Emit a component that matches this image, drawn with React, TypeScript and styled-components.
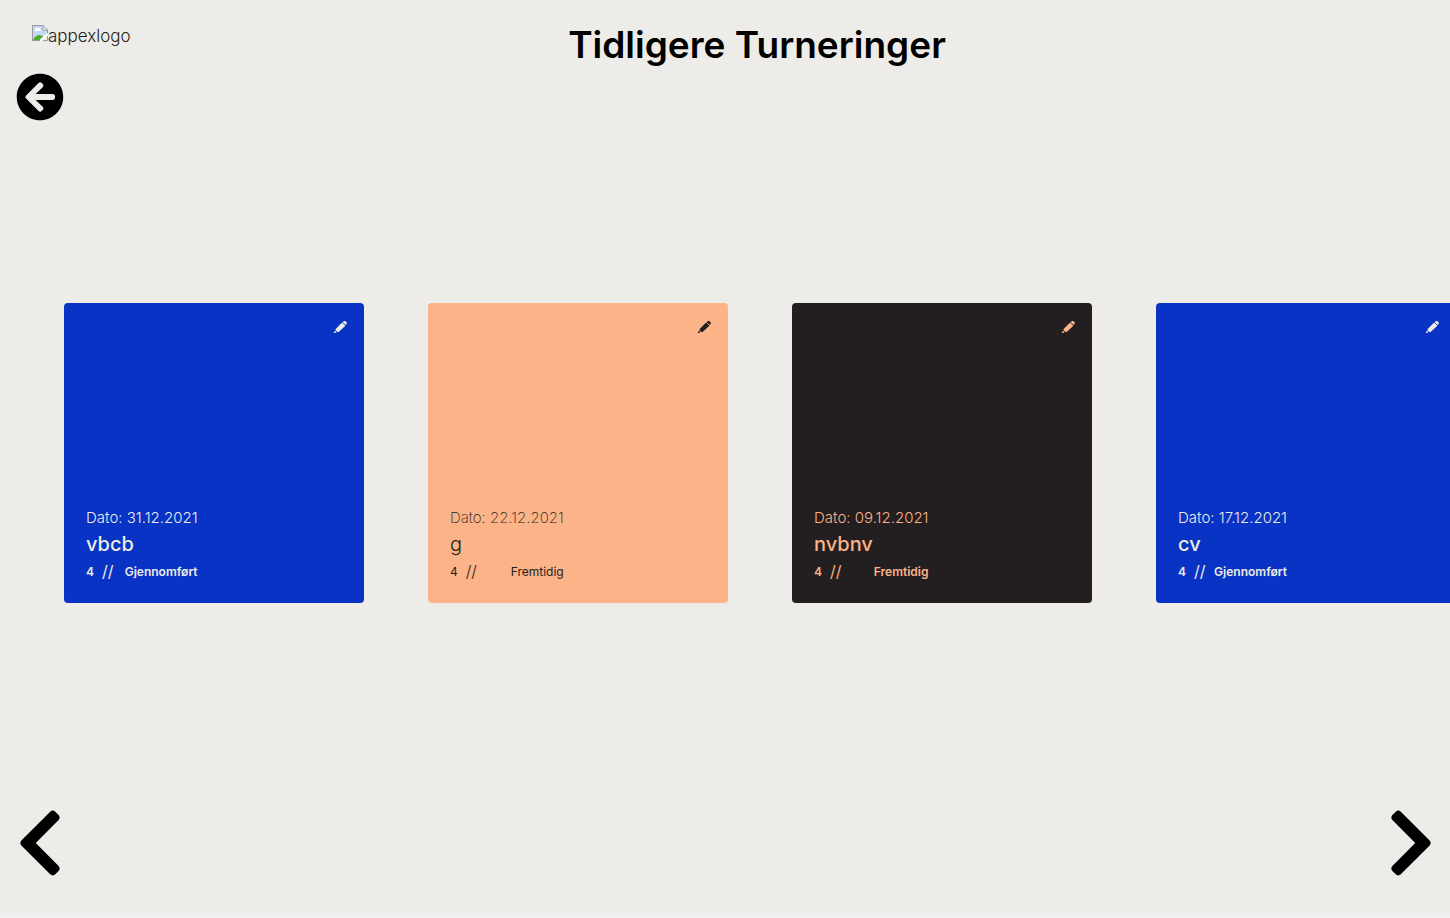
import React from 'react';
import styled, { createGlobalStyle } from 'styled-components';
import { FaArrowCircleLeft, FaChevronLeft, FaChevronRight } from 'react-icons/fa';

const GlobalStyle = createGlobalStyle`
  * { box-sizing: border-box; }
  body {
    margin: 0;
    background: #edece8;
    color: #000;
    font-family: Inter, 'Open Sans', sans-serif;
  }
  h1, h2, p { margin: 0; }
`;

const Page = styled.div`
  display: flex;
  flex-direction: column;
  min-height: 100vh;
  border-bottom: 5px solid #f1f1f1;
  overflow: hidden;
`;

const Header = styled.header`
  display: grid;
  align-items: start;
  height: 72px;
  padding-top: 16px;
`;

const Logo = styled.a`
  grid-area: 1 / 1;
  justify-self: start;
  display: flex;
  margin: 9px 0 0 32px;
  color: #231f20;
  font-size: 17px;
  font-weight: 300;
  line-height: 22px;
  text-decoration: none;
`;

const Title = styled.h1`
  grid-area: 1 / 1;
  padding-left: 64px;
  text-align: center;
  font-size: 37px;
  font-weight: 600;
  line-height: 58px;
`;

const IconButton = styled.button<{ $size: number }>`
  display: flex;
  padding: 0;
  border: 0;
  background: none;
  color: inherit;
  font-size: ${(p) => p.$size}px;
  cursor: pointer;
`;

const BackRow = styled.nav`
  display: flex;
  padding: 1px 16px;
`;

const Rail = styled.main`
  flex: 1;
  display: flex;
  align-items: center;
  gap: 64px;
  padding: 0 64px;
  margin-bottom: 22px;
  overflow: hidden;
`;

const tones = {
  blue: { background: '#0833c4', color: '#edece8', light: 300, regular: 500, strong: 600, slash: 400 },
  peach: { background: '#fbb387', color: '#231f20', light: 200, regular: 300, strong: 400, slash: 300 },
  dark: { background: '#231f20', color: '#fbb387', light: 300, regular: 500, strong: 600, slash: 400 },
};

type Tone = keyof typeof tones;

const CardBox = styled.article<{ $tone: Tone }>`
  flex: none;
  display: flex;
  flex-direction: column;
  justify-content: space-between;
  width: 300px;
  height: 300px;
  padding: 16px 16px 19px 22px;
  border-radius: 4px;
  background: ${(p) => tones[p.$tone].background};
  color: ${(p) => tones[p.$tone].color};
`;

const CardActions = styled.div`
  display: flex;
  justify-content: flex-end;
`;

const Details = styled.div`
  display: flex;
  flex-direction: column;
  align-self: flex-start;
`;

const DateLine = styled.p<{ $tone: Tone }>`
  font-size: 15px;
  font-weight: ${(p) => tones[p.$tone].light};
  line-height: 24px;
`;

const Name = styled.h2<{ $tone: Tone }>`
  margin-bottom: 2px;
  font-size: 20px;
  font-weight: ${(p) => tones[p.$tone].regular};
  line-height: 28px;
`;

const Meta = styled.p<{ $tone: Tone }>`
  display: flex;
  gap: 8px;
  font-size: 12px;
  font-weight: ${(p) => tones[p.$tone].strong};
  line-height: 24px;
`;

const Slashes = styled.span<{ $tone: Tone }>`
  font-size: 16px;
  font-weight: ${(p) => tones[p.$tone].slash};
  line-height: 22px;
`;

const Status = styled.span`
  margin-left: auto;
`;

const Pager = styled.nav`
  display: flex;
  justify-content: space-between;
  padding: 0 1px 32px 2px;
`;

const BrokenImage = () => (
  <svg width="16" height="16" viewBox="0 0 16 16" aria-hidden="true">
    <path d="M.5.5H11l4.500 4.500V8L8 15.500H.5z" fill="#c4d8f5" />
    <path d="M3 5.500a1.500 1.500 0 0 1 1-2 2 2 0 0 1 3.500 0A1.300 1.300 0 0 1 8 6H3z" fill="#fff" />
    <path d="M1 15c1-3 4-5 6-5 2 0 4 1 4.500 2.500L9 15z" fill="#4caf3c" />
    <path d="M11 .5V5h4.500z" fill="#fff" />
    <path d="M15.500 8V5L11 .5H.5v15H8M11 .5V5h4.500M11 15.500h4.500V11" fill="none" stroke="#999" />
    <path d="M8.500 15.500l7-6.500" stroke="#fff" strokeWidth="2" />
  </svg>
);

const PencilIcon = () => (
  <svg width="16" height="16" viewBox="0 0 16 16" fill="currentColor" aria-hidden="true">
    <path d="M10.100 3.600l3.300 3.200-6.500 5.900c-.6.500-1.200.5-1.700.1L3.800 11.400c-.4-.5-.4-1.100.1-1.600z" />
    <path d="M10.600 3.200l1-.9c.6-.5 1.400-.5 2 0l.8.800c.6.600.6 1.400.1 2l-.8.900z" />
    <path d="M3 11.600l1.600 1.600-2 .8c-.5.100-.8-.2-.7-.6z" />
  </svg>
);

interface Tournament {
  date: string;
  name: string;
  players: number;
  status: string;
  tone: Tone;
}

const tournaments: Tournament[] = [
  { date: '31.12.2021', name: 'vbcb', players: 4, status: 'Gjennomført', tone: 'blue' },
  { date: '22.12.2021', name: 'g', players: 4, status: 'Fremtidig', tone: 'peach' },
  { date: '09.12.2021', name: 'nvbnv', players: 4, status: 'Fremtidig', tone: 'dark' },
  { date: '17.12.2021', name: 'cv', players: 4, status: 'Gjennomført', tone: 'blue' },
];

const TournamentCard = ({ date, name, players, status, tone }: Tournament) => (
  <CardBox $tone={tone}>
    <CardActions>
      <IconButton $size={16} aria-label={`Rediger ${name}`}>
        <PencilIcon />
      </IconButton>
    </CardActions>
    <Details>
      <DateLine $tone={tone}>Dato: {date}</DateLine>
      <Name $tone={tone}>{name}</Name>
      <Meta $tone={tone}>
        <span>{players}</span>
        <Slashes $tone={tone}>//</Slashes>
        <Status>{status}</Status>
      </Meta>
    </Details>
  </CardBox>
);

export default function App() {
  return (
    <Page>
      <GlobalStyle />
      <Header>
        <Logo href="/">
          <BrokenImage />
          appexlogo
        </Logo>
        <Title>Tidligere Turneringer</Title>
      </Header>
      <BackRow>
        <IconButton $size={48} aria-label="Tilbake">
          <FaArrowCircleLeft />
        </IconButton>
      </BackRow>
      <Rail>
        {tournaments.map((t) => (
          <TournamentCard key={t.date} {...t} />
        ))}
      </Rail>
      <Pager>
        <IconButton $size={76} aria-label="Forrige">
          <FaChevronLeft />
        </IconButton>
        <IconButton $size={76} aria-label="Neste">
          <FaChevronRight />
        </IconButton>
      </Pager>
    </Page>
  );
}
